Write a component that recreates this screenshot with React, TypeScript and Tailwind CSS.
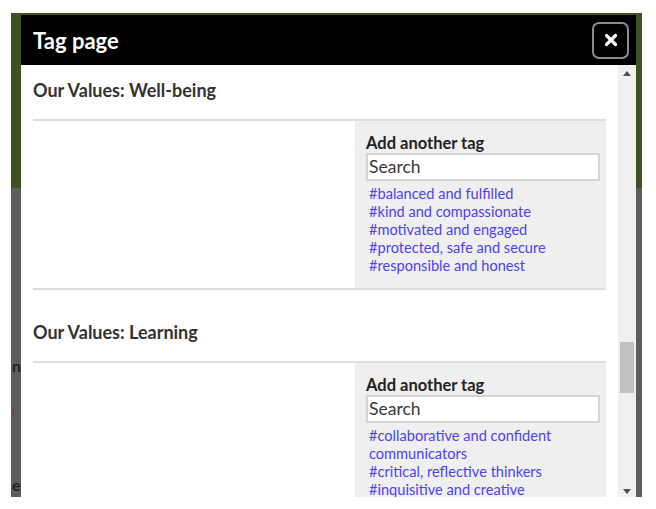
import React from 'react'

const sections = [
  {
    title: 'Our Values: Well-being',
    tags: [
      '#balanced and fulfilled',
      '#kind and compassionate',
      '#motivated and engaged',
      '#protected, safe and secure',
      '#responsible and honest',
    ],
  },
  {
    title: 'Our Values: Learning',
    tags: [
      '#collaborative and confident communicators',
      '#critical, reflective thinkers',
      '#inquisitive and creative',
    ],
  },
]

function TagSection({ title, tags, first }: { title: string; tags: string[]; first?: boolean }) {
  return (
    <div className={first ? 'pt-[14px]' : 'pt-[31px]'}>
      <h2 className="text-[18px] leading-[22px] font-bold text-[#333]">{title}</h2>
      <div className="mt-[18px] border-t-2 border-b-2 border-[#dedede] flex">
        <div className="flex-1" />
        <div className="w-[251px] bg-[#efefef] pl-[11px] pr-[6px] pt-[12px] pb-[13px]">
          <div className="text-[16.5px] leading-[20px] font-bold text-[#222]">Add another tag</div>
          <div className="h-[28px] border-2 border-[#d4d4d4] bg-white flex items-center px-[1px] text-[17.5px] text-[#3a3a3a]">
            Search
          </div>
          <ul className="mt-[4px] text-[14.6px] leading-[18px] text-[#4d42ee] pl-[3px]">
            {tags.map((t) => (
              <li key={t}>{t}</li>
            ))}
          </ul>
        </div>
      </div>
    </div>
  )
}

export default function App() {
  return (
    <div className="w-[656px] h-[509px] bg-white overflow-hidden" style={{ fontFamily: 'Lato, "Open Sans", sans-serif' }}>
      <div className="ml-[11px] mt-[13px] w-[631px] h-[484px] flex overflow-hidden">
        {/* backdrop page, left edge */}
        <div className="w-[10px] flex flex-col shrink-0 overflow-hidden">
          <div className="h-[175px] bg-[#3b5221]" />
          <div className="flex-1 bg-[#5d5d5d] text-[#222] text-[16px] font-bold leading-none pl-[1px]">
            <div className="mt-[170px]">n</div>
            <div className="mt-[27px] text-[#6b4a40] font-normal">r</div>
            <div className="mt-[60px]">ec</div>
          </div>
        </div>

        {/* modal */}
        <div className="w-[615px] flex flex-col shrink-0 bg-[#3b5221] pt-[2px]">
          <div className="h-[50px] bg-black flex items-center justify-between pl-3 pr-[7px]">
            <span className="text-white text-[22px] font-bold">Tag page</span>
            <button className="w-[37px] h-[37px] border-2 border-[#8a8a8a] rounded-[7px] flex items-center justify-center">
              <svg width="14" height="14" viewBox="0 0 14 14">
                <path d="M2.5 2.5 L11.5 11.5 M11.5 2.5 L2.5 11.5" stroke="white" strokeWidth="3.2" strokeLinecap="round" />
              </svg>
            </button>
          </div>
          <div className="flex-1 flex bg-white overflow-hidden">
            <div className="flex-1 px-3 overflow-hidden">
              {sections.map((s, i) => (
                <TagSection key={s.title} title={s.title} tags={s.tags} first={i === 0} />
              ))}
            </div>
            {/* scrollbar */}
            <div className="w-[18px] bg-[#f0f0f0] flex flex-col items-center">
              <div className="h-[17px] flex items-center justify-center">
                <svg width="8" height="5" viewBox="0 0 8 5"><path d="M0 5 L4 0 L8 5 Z" fill="#505050" /></svg>
              </div>
              <div className="h-[260px]" />
              <div className="w-[14px] h-[51px] bg-[#c1c1c1]" />
              <div className="flex-1" />
              <div className="h-[8px] flex items-start justify-center">
                <svg width="8" height="5" viewBox="0 0 8 5"><path d="M0 0 L4 5 L8 0 Z" fill="#505050" /></svg>
              </div>
            </div>
          </div>
        </div>

        {/* backdrop page, right edge */}
        <div className="w-[6px] flex flex-col shrink-0">
          <div className="h-[175px] bg-[#3b5221]" />
          <div className="flex-1 bg-[#5d5d5d]" />
        </div>
      </div>
    </div>
  )
}
